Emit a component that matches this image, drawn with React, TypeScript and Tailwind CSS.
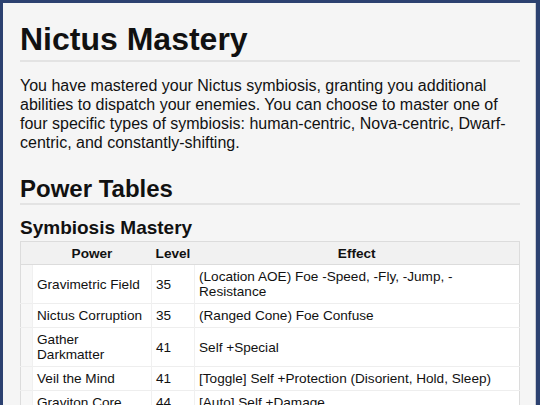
const rows: { power: string; level: string; effect: string }[] = [
  {
    power: "Gravimetric Field",
    level: "35",
    effect: "(Location AOE) Foe -Speed, -Fly, -Jump, -Resistance",
  },
  { power: "Nictus Corruption", level: "35", effect: "(Ranged Cone) Foe Confuse" },
  { power: "Gather Darkmatter", level: "41", effect: "Self +Special" },
  {
    power: "Veil the Mind",
    level: "41",
    effect: "[Toggle] Self +Protection (Disorient, Hold, Sleep)",
  },
  { power: "Graviton Core", level: "44", effect: "[Auto] Self +Damage" },
];

export default function App() {
  return (
    <div className="h-[405px] w-[540px] overflow-hidden bg-[#2c4170] pl-[3px] pr-[5px] pt-[3px] font-['Liberation_Sans',Arial,sans-serif] text-[#111]">
      <div className="h-full overflow-hidden bg-[#f5f5f5] pl-[17px] pr-[15px] pt-[18px] shadow-[1px_0_0_#c9cbd2]">
        <h1 className="border-b-2 border-[#e3e3e3] pb-[2px] text-[32px] font-bold leading-[37px]">
          Nictus Mastery
        </h1>
        <p className="mt-[14px] text-[16px] leading-[19px]">
          You have mastered your Nictus symbiosis, granting you additional
          abilities to dispatch your enemies. You can choose to master one of
          four specific types of symbiosis: human-centric, Nova-centric,
          Dwarf-centric, and constantly-shifting.
        </p>
        <h2 className="mt-[23px] border-b-2 border-[#e3e3e3] text-[24px] font-bold leading-[28px]">
          Power Tables
        </h2>
        <h3 className="mt-[12px] text-[19px] font-bold leading-[22px]">
          Symbiosis Mastery
        </h3>
        <table className="mt-[2px] w-full border-collapse border border-[#dcdcdc] text-[13.6px] leading-[15px]">
          <colgroup>
            <col className="w-[12px]" />
            <col className="w-[119px]" />
            <col className="w-[43px]" />
            <col />
          </colgroup>
          <thead>
            <tr className="bg-[#f1f1f1]">
              <th className="border-b border-[#dcdcdc]" />
              <th className="border-b border-[#dcdcdc] px-1 pb-[3px] pt-[4px] text-center font-bold">
                Power
              </th>
              <th className="border-b border-[#dcdcdc] px-1 pb-[3px] pt-[4px] text-center font-bold">
                Level
              </th>
              <th className="border-b border-[#dcdcdc] px-1 pb-[3px] pt-[4px] text-center font-bold">
                Effect
              </th>
            </tr>
          </thead>
          <tbody>
            {rows.map((r) => (
              <tr key={r.power} className="border-b border-[#eeeeee]">
                <td className="bg-[#f7f7f7]" />
                <td className="border-x border-[#f0f0f0] bg-white px-1 py-[4px] align-middle">
                  {r.power}
                </td>
                <td className="border-x border-[#f0f0f0] bg-white px-1 py-[4px] align-middle">
                  {r.level}
                </td>
                <td className="bg-white px-1 py-[4px] align-middle">{r.effect}</td>
              </tr>
            ))}
          </tbody>
        </table>
      </div>
    </div>
  );
}
